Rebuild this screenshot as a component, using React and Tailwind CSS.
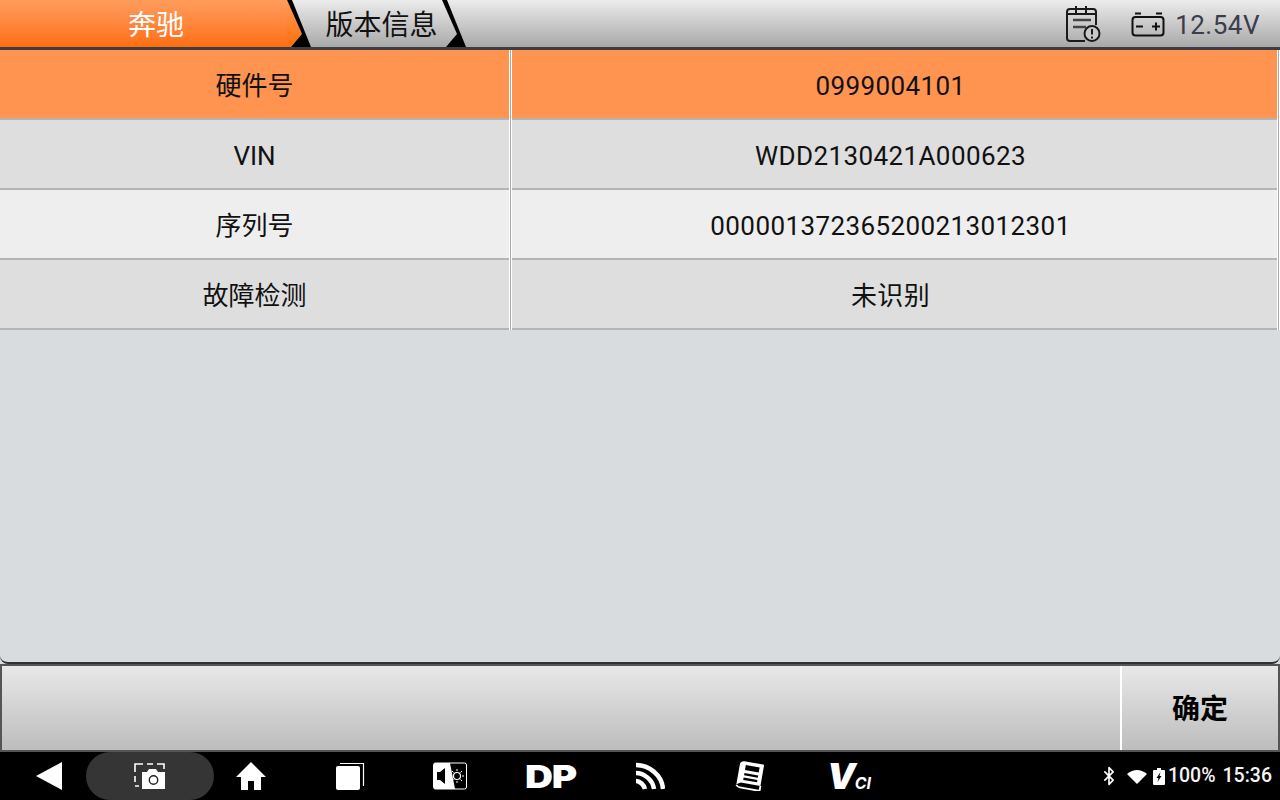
import React from 'react';
import { Bluetooth } from 'lucide-react';

const rows = [
  { label: '硬件号', value: '0999004101', bg: 'bg-[#ff9451]' },
  { label: 'VIN', value: 'WDD2130421A000623', bg: 'bg-[#dedede]' },
  { label: '序列号', value: '000001372365200213012301', bg: 'bg-[#eeeeee]' },
  { label: '故障检测', value: '未识别', bg: 'bg-[#dedede]' },
];

// chevron after a tab: tab colour up to the notch, then the black slash and fold
const TabEdge = ({ id, from, to }) => (
  <svg width="24" height="47" viewBox="0 0 24 47" className="absolute left-full top-0">
    <defs>
      <linearGradient id={id} x1="0" y1="0" x2="0" y2="1">
        <stop offset="0" stopColor={from} />
        <stop offset="1" stopColor={to} />
      </linearGradient>
    </defs>
    <path d="M0 0 L15 34 L4 47 L0 47 Z" fill={`url(#${id})`} />
    <path d="M0 0 L5 0 L24 47 L4 47 L15 34 Z" fill="#000" />
  </svg>
);

const CalendarIcon = () => (
  <svg width="36" height="38" viewBox="0 0 36 38" fill="none" stroke="#1a1a1a" strokeWidth="2">
    <path d="M20 36H5a3 3 0 0 1-3-3V7a3 3 0 0 1 3-3h23a3 3 0 0 1 3 3v13" />
    <path d="M11 1v8M21 1v8M2 9h29" />
    <path d="M8 15h18M8 22h13" strokeWidth="2.6" stroke="#444" />
    <circle cx="27" cy="28.5" r="7.5" fill="#c8c8c8" />
    <path d="M27 24v5.5M27 31.5v2" strokeWidth="2" />
  </svg>
);

const BatteryIcon = () => (
  <svg width="34" height="26" viewBox="0 0 34 26" fill="none" stroke="#111" strokeWidth="2">
    <rect x="1.5" y="6" width="31" height="18.5" rx="3" />
    <path d="M4 2.5h6M25 2.5h6" />
    <path d="M5 15.5h7M21 15.5h8M25 11.5v8" />
  </svg>
);

const CameraIcon = () => (
  <svg width="34" height="28" viewBox="0 0 34 28">
    <path d="M2 10V2h8M14 2h6M24 2h7v5M2 14v6M2 24h4" fill="none" stroke="#fff" strokeWidth="1.6" />
    <path d="M9 10h5l2-3h7l2 3h7v17H9z" fill="#fff" />
    <circle cx="20.5" cy="18" r="4.2" fill="none" stroke="#222" strokeWidth="1.4" />
  </svg>
);

const HomeIcon = () => (
  <svg width="32" height="30" viewBox="0 0 32 30" fill="#fff">
    <path d="M16 1 L31 16 H26 V29 H19 V20 H13 V29 H6 V16 H1 Z" />
  </svg>
);

const RecentIcon = () => (
  <svg width="30" height="28" viewBox="0 0 30 28" fill="#fff">
    <rect x="1" y="4" width="24" height="24" rx="2" />
    <path d="M5 1.5h23.5V24" fill="none" stroke="#fff" strokeWidth="1.2" />
  </svg>
);

const VolumeBrightIcon = () => (
  <svg width="34" height="28" viewBox="0 0 34 28">
    <rect x="0.5" y="1" width="33" height="26" rx="2" fill="#000" stroke="#fff" />
    <path d="M2 1h15l5 26H2a1 1 0 0 1-1-1V2a1 1 0 0 1 1-1z" fill="#fff" />
    <path d="M4 10h3l5-4v16l-5-4H4z" fill="#000" />
    <circle cx="24" cy="14" r="3.5" fill="none" stroke="#fff" strokeWidth="1.2" />
    <path d="M24 7v2M24 19v2M17 14h2M29 14h2M19 9l1.5 1.5M29 9l-1.5 1.5M19 19l1.5-1.5M29 19l-1.5-1.5" stroke="#fff" />
  </svg>
);

const FeedIcon = () => (
  <svg width="30" height="28" viewBox="0 0 30 28" fill="none" stroke="#fff">
    <path d="M1 3c13 0 26 10 27 24" strokeWidth="4.5" />
    <path d="M1 11c8 0 17 7 18 16" strokeWidth="4.5" />
    <path d="M1 19c4 0 8 4 9 8" strokeWidth="4.5" />
  </svg>
);

const BookIcon = () => (
  <svg width="32" height="30" viewBox="0 0 32 30">
    <g transform="rotate(10 16 15)">
      <path d="M8 1.5h19a1 1 0 0 1 1 1V23H8l-4 2.5V6a4 4 0 0 1 4-4.5z" fill="#fff" />
      <path d="M10 5h14v5H10zM10 13h14v2.4H10zM10 17.6h14V20H10z" fill="#000" />
      <path d="M4 26c1 1.5 2 2 4 2h20v-5" stroke="#fff" strokeWidth="1.8" fill="none" />
    </g>
  </svg>
);

const WifiIcon = () => (
  <svg width="20" height="15" viewBox="0 0 20 15" fill="#fff">
    <path d="M0 5 Q10 -3 20 5 L10 15 Z" />
  </svg>
);

const ChargeIcon = () => (
  <svg width="12" height="17" viewBox="0 0 12 17">
    <path d="M4 0h4v2h3a1 1 0 0 1 1 1v13a1 1 0 0 1-1 1H1a1 1 0 0 1-1-1V3a1 1 0 0 1 1-1h3z" fill="#fff" />
    <path d="M7.5 4 L3.5 10 H5.5 L4.5 14 L8.5 8 H6.5 Z" fill="#000" />
  </svg>
);

const NavCell = ({ children }) => (
  <div className="w-[100px] flex items-center justify-center">{children}</div>
);

// 1px grey rule with a white hairline each side
const ColumnRule = () => (
  <div className="w-[3px] shrink-0 bg-[#a9a9a9] border-x border-x-white" />
);

export default function App() {
  return (
    <div
      className="w-[1280px] h-[800px] flex flex-col overflow-hidden bg-[#d8dcdf] text-[#111]"
      style={{ fontFamily: 'Roboto, "Noto Sans CJK SC", sans-serif' }}
    >
      {/* Header */}
      <div className="h-[47px] flex items-stretch bg-gradient-to-b from-[#ececec] to-[#a9a9a9]">
        <div className="relative w-[287px] flex items-center justify-center pl-[25px] pt-[4px] text-[28px] text-white bg-gradient-to-b from-[#ff9c5b] to-[#ff6e08]">
          奔驰
          <TabEdge id="edge-a" from="#ff9c5b" to="#ff6e08" />
        </div>
        <div className="relative w-[155px] flex items-center justify-center pl-[34px] pt-[4px] text-[28px] whitespace-nowrap">
          版本信息
          <TabEdge id="edge-b" from="#ececec" to="#a9a9a9" />
        </div>
        <div className="flex-1 flex items-center justify-end pr-[20px]">
          <CalendarIcon />
          <div className="ml-[30px]"><BatteryIcon /></div>
          <span className="ml-[10px] pt-[3px] text-[26px] tracking-[0.5px] text-[#3a3d4a]">12.54V</span>
        </div>
      </div>
      <div className="h-[3px] bg-[#3b3d45]" />

      {/* Version table */}
      <div className="flex flex-col">
        {rows.map((row) => (
          <div key={row.label} className={`h-[70px] flex ${row.bg}`}>
            <div className="w-[509px] flex items-center justify-center pt-[4px] text-[26px] border-b-2 border-b-[#b4b4b4]">
              {row.label}
            </div>
            <ColumnRule />
            <div className="flex-1 flex items-center justify-center pt-[4px] pr-[8px] text-[26px] tracking-[0.4px] border-b-2 border-b-[#b4b4b4]">
              {row.value}
            </div>
            <ColumnRule />
          </div>
        ))}
      </div>

      <div className="flex-1 rounded-b-lg border-b-2 border-b-[#2f3138]" />

      {/* Bottom action bar */}
      <div className="h-[88px] flex border-[2px] border-[#555] bg-gradient-to-b from-[#e8e8e8] to-[#bdbdbd]">
        <div className="flex-1" />
        <div className="w-[158px] flex items-center justify-center pt-[4px] border-l-2 border-l-white text-[28px] font-bold text-black">
          确定
        </div>
      </div>

      {/* Android nav bar */}
      <div className="h-[48px] flex items-center bg-black text-white">
        <div className="w-[98px] flex items-center justify-center">
          <svg width="26" height="28" viewBox="0 0 26 28" fill="#fff">
            <path d="M26 0 V28 L0 14 Z" />
          </svg>
        </div>
        <div className="w-[104px] flex justify-center">
          <div className="w-[128px] h-[48px] shrink-0 rounded-full bg-[#353535] flex items-center justify-center">
            <CameraIcon />
          </div>
        </div>
        <div className="w-[98px] flex items-center justify-center"><HomeIcon /></div>
        <NavCell><RecentIcon /></NavCell>
        <NavCell><VolumeBrightIcon /></NavCell>
        <NavCell>
          <span className="text-[31px] leading-none font-black tracking-[-1px] scale-x-125" style={{ fontFamily: 'Inter, sans-serif' }}>DP</span>
        </NavCell>
        <NavCell><FeedIcon /></NavCell>
        <NavCell><BookIcon /></NavCell>
        <div className="w-[98px] flex items-center justify-center">
          <span className="italic font-black leading-none text-[36px]" style={{ fontFamily: 'Inter, sans-serif' }}>
            V<span className="text-[16px] font-bold -ml-[1px]">CI</span>
          </span>
        </div>
        <div className="flex-1 flex items-center justify-end pr-[8px] gap-[3px]">
          <Bluetooth size={20} strokeWidth={2} />
          <div className="ml-[5px]"><WifiIcon /></div>
          <div className="ml-[3px]"><ChargeIcon /></div>
          <span className="text-[19.5px] font-medium text-[#f4f4f4]">100%</span>
          <span className="ml-[4px] text-[19.5px] font-medium text-[#f4f4f4]">15:36</span>
        </div>
      </div>
    </div>
  );
}
